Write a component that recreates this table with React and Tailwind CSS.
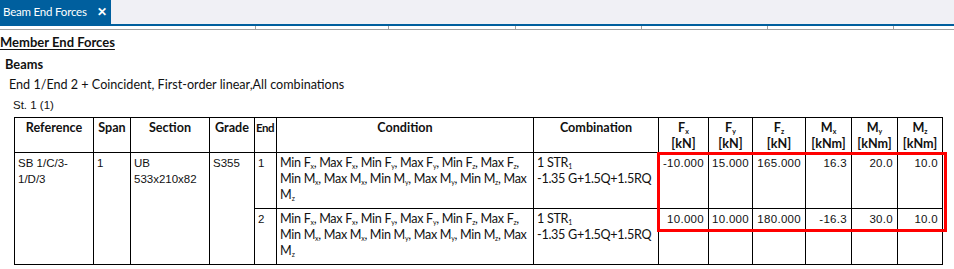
import React from 'react';

const cols = ['w-[79px]', 'w-[37px]', 'w-[79px]', 'w-[45px]', 'w-[22px]', 'w-[257px]', 'w-[125px]', 'w-[50px]', 'w-[44px]', 'w-[53px]', 'w-[46px]', 'w-[46px]', 'w-[45px]'];

const Sub = ({ children }) => <sub className="text-[7px] bottom-[-0.3em]">{children}</sub>;

const Condition = () => (
  <>
    <div className="whitespace-nowrap tracking-[-0.3px]">
      Min F<Sub>x</Sub>, Max F<Sub>x</Sub>, Min F<Sub>y</Sub>, Max F<Sub>y</Sub>, Min F<Sub>z</Sub>, Max F<Sub>z</Sub>,
    </div>
    <div className="whitespace-nowrap tracking-[-0.3px]">
      Min M<Sub>x</Sub>, Max M<Sub>x</Sub>, Min M<Sub>y</Sub>, Max M<Sub>y</Sub>, Min M<Sub>z</Sub>, Max
    </div>
    <div>
      M<Sub>z</Sub>
    </div>
  </>
);

const Combination = () => (
  <div className="text-[12.6px] tracking-[-0.3px]">
    <div className="whitespace-nowrap">1 STR<Sub>1</Sub></div>
    <div className="whitespace-nowrap">-1.35 G+1.5Q+1.5RQ</div>
  </div>
);

const rows = [
  { end: '1', values: ['-10.000', '15.000', '165.000', '16.3', '20.0', '10.0'] },
  { end: '2', values: ['10.000', '10.000', '180.000', '-16.3', '30.0', '10.0'] },
];

const forceHeads = [
  ['F', 'x', 'kN'],
  ['F', 'y', 'kN'],
  ['F', 'z', 'kN'],
  ['M', 'x', 'kNm'],
  ['M', 'y', 'kNm'],
  ['M', 'z', 'kNm'],
];

const td = 'border border-black align-top px-[3px] pt-[2px]';
const data = "font-['Liberation_Sans',Arial,sans-serif] text-[11.5px] leading-[16px]";
const body = 'text-[12.6px] leading-[16px]';

export default function App() {
  return (
    <div className="w-[954px] h-[269px] bg-white overflow-hidden font-['Lato',sans-serif] text-[#111]">
      {/* tab strip */}
      <div className="h-[24px] bg-[#f0f0f5] flex">
        <div className="w-[111px] bg-[#005f9e] text-white flex items-center pl-[3px] whitespace-nowrap">
          <span className="text-[11.5px] tracking-[-0.2px] w-[94px]">Beam End Forces</span>
          <span className="font-bold text-[12px]">✕</span>
        </div>
      </div>
      <div className="h-[2px] bg-[#005f9e]" />
      <div className="h-[4px] flex border-b border-[#a0a0a0]">
        <div className="w-[256px] border-r border-[#a0a0a0]" />
        <div className="w-[133px] border-r border-[#a0a0a0]" />
        <div className="w-[127px] border-r border-[#a0a0a0]" />
        <div className="w-[126px] border-r border-[#a0a0a0]" />
        <div className="w-[126px] border-r border-[#a0a0a0]" />
        <div className="w-[126px] border-r border-[#a0a0a0]" />
      </div>

      {/* report */}
      <div className="pt-[4px]">
        <div className="font-bold text-[13px] leading-[16px] underline underline-offset-2">Member End Forces</div>
        <div className="font-bold text-[12.8px] leading-[16px] pl-[5px] mt-[6px]">Beams</div>
        <div className={`${body} pl-[9px] mt-[5px]`}>End 1/End 2 + Coincident, First-order linear,All combinations</div>
        <div className={`${data} pl-[13px] mt-[4px] leading-[14px]`}>St. 1 (1)</div>

        <div className="relative ml-[14px] mt-[4px] w-[929px]">
          <table className="table-fixed border-collapse w-[929px]">
            <colgroup>
              {cols.map((c, i) => (
                <col key={i} className={c} />
              ))}
            </colgroup>
            <thead>
              <tr className="h-[35px] text-[12.6px] leading-[16px] font-bold">
                <th className={`${td} text-center`}>Reference</th>
                <th className={`${td} text-center`}>Span</th>
                <th className={`${td} text-center`}>Section</th>
                <th className={`${td} text-center`}>Grade</th>
                <th className={`${td} text-left pl-[1px] pr-0 text-[11.5px] tracking-[-0.5px]`}>End</th>
                <th className={`${td} text-center`}>Condition</th>
                <th className={`${td} text-center`}>Combination</th>
                {forceHeads.map(([l, s, u], i) => (
                  <th key={i} className={`${td} text-center px-0`}>
                    <div>
                      {l}
                      <Sub>{s}</Sub>
                    </div>
                    <div>[{u}]</div>
                  </th>
                ))}
              </tr>
            </thead>
            <tbody>
              {rows.map((r, i) => (
                <tr key={i} className="h-[56px]">
                  {i === 0 && (
                    <>
                      <td rowSpan={2} className={`${td} ${data}`}>SB 1/C/3-<br />1/D/3</td>
                      <td rowSpan={2} className={`${td} ${data}`}>1</td>
                      <td rowSpan={2} className={`${td} ${data}`}>UB<br />533x210x82</td>
                      <td rowSpan={2} className={`${td} ${data}`}>S355</td>
                    </>
                  )}
                  <td className={`${td} ${data}`}>{r.end}</td>
                  <td className={`${td} ${body}`}>
                    <Condition />
                  </td>
                  <td className={`${td} ${body}`}>
                    <Combination />
                  </td>
                  {r.values.map((v, j) => (
                    <td key={j} className={`${td} ${data} text-right pr-[4px] tracking-[0.3px]`}>
                      {v}
                    </td>
                  ))}
                </tr>
              ))}
            </tbody>
          </table>
          <div className="absolute left-[643px] top-[35px] w-[290px] h-[80px] border-[3px] border-[#ff0000]" />
        </div>
      </div>
    </div>
  );
}
